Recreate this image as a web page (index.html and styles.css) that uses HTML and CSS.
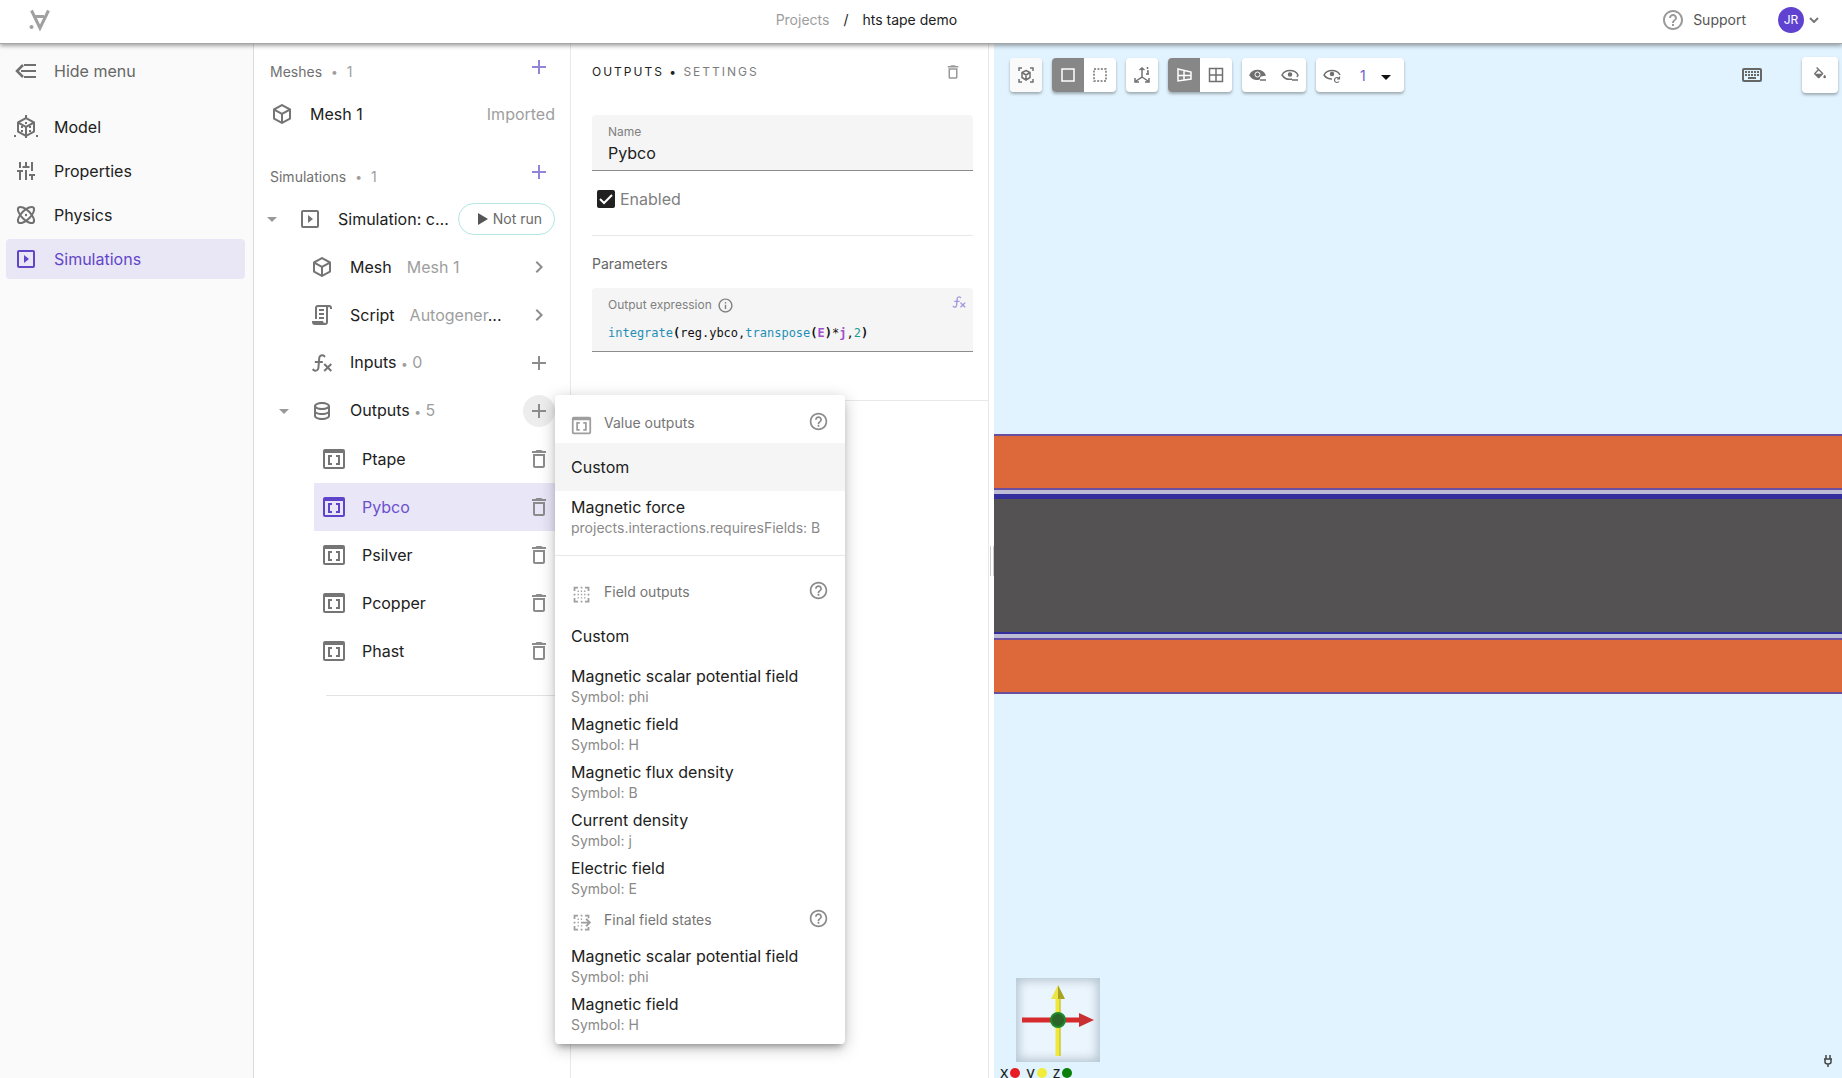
FILE: index.html
```html
<!DOCTYPE html>
<html lang="en">
<head>
<meta charset="utf-8">
<title>hts tape demo</title>
<link rel="stylesheet" href="styles.css">
</head>
<body>
<svg class="sprite" aria-hidden="true">
  <symbol id="cube" viewBox="0 0 24 24"><path d="M21,16.5C21,16.88 20.79,17.21 20.47,17.38L12.57,21.82C12.41,21.94 12.21,22 12,22C11.79,22 11.59,21.94 11.43,21.82L3.53,17.38C3.21,17.21 3,16.88 3,16.5V7.5C3,7.12 3.21,6.79 3.53,6.62L11.43,2.18C11.59,2.06 11.79,2 12,2C12.21,2 12.41,2.06 12.57,2.18L20.47,6.62C20.79,6.79 21,7.12 21,7.5V16.5M12,4.15L6.04,7.5L12,10.85L17.96,7.5L12,4.15M5,15.91L11,19.29V12.58L5,9.21V15.91M19,15.91V9.21L13,12.58V19.29L19,15.91Z"/></symbol>
  <symbol id="trash" viewBox="0 0 24 24"><path d="M6 19c0 1.1.9 2 2 2h8c1.1 0 2-.9 2-2V7H6v12zM8 9h8v10H8V9zm7.5-5-1-1h-5l-1 1H5v2h14V4z"/></symbol>
  <symbol id="help" viewBox="0 0 24 24"><path d="M11 18h2v-2h-2v2zm1-16C6.48 2 2 6.48 2 12s4.48 10 10 10 10-4.48 10-10S17.52 2 12 2zm0 18c-4.41 0-8-3.59-8-8s3.59-8 8-8 8 3.59 8 8-3.59 8-8 8zm0-14c-2.21 0-4 1.79-4 4h2c0-1.1.9-2 2-2s2 .9 2 2c0 2-3 1.75-3 5h2c0-2.25 3-2.5 3-5 0-2.21-1.79-4-4-4z"/></symbol>
  <symbol id="info" viewBox="0 0 24 24"><path d="M11 7h2v2h-2zm0 4h2v6h-2zm1-9C6.48 2 2 6.48 2 12s4.48 10 10 10 10-4.48 10-10S17.52 2 12 2zm0 18c-4.41 0-8-3.59-8-8s3.59-8 8-8 8 3.59 8 8-3.59 8-8 8z"/></symbol>
  <symbol id="database" viewBox="0 0 24 24"><path d="M12 3C7.58 3 4 4.79 4 7V17C4 19.21 7.59 21 12 21S20 19.21 20 17V7C20 4.79 16.42 3 12 3M18 17C18 17.5 15.87 19 12 19S6 17.5 6 17V14.77C7.61 15.55 9.72 16 12 16S16.39 15.55 18 14.77V17M18 12.45C16.7 13.4 14.42 14 12 14C9.58 14 7.3 13.4 6 12.45V9.64C7.47 10.47 9.61 11 12 11C14.39 11 16.53 10.47 18 9.64V12.45M12 9C8.13 9 6 7.5 6 7S8.13 5 12 5 18 6.5 18 7 15.87 9 12 9Z"/></symbol>
  <symbol id="script" viewBox="0 0 24 24"><path d="M15,20A1,1 0 0,0 16,19V4H8A1,1 0 0,0 7,5V16H5V5A3,3 0 0,1 8,2H19A3,3 0 0,1 22,5V6H20V5A1,1 0 0,0 19,4A1,1 0 0,0 18,5V9L18,19A3,3 0 0,1 15,22H5A3,3 0 0,1 2,19V18H13A2,2 0 0,0 15,20M9,6H14V8H9V6M9,10H14V12H9V10M9,14H14V16H9V14Z"/></symbol>
  <symbol id="fx" viewBox="0 0 24 24"><path d="M12.42,5.29C11.32,5.19 10.35,6 10.25,7.11L10,10H12.82V12H9.82L9.38,17.07C9.18,19.27 7.24,20.9 5.04,20.7C3.79,20.59 2.66,19.9 2,18.83L3.5,17.33C3.83,18.38 4.96,18.97 6,18.63C6.78,18.39 7.33,17.7 7.4,16.89L7.82,12H4.82V10H8L8.27,6.93C8.46,4.73 10.39,3.1 12.6,3.28C13.86,3.39 15,4.09 15.66,5.17L14.16,6.67C13.91,5.9 13.23,5.36 12.42,5.29M22,13.65L20.59,12.24L17.76,15.07L14.93,12.24L13.5,13.65L16.35,16.5L13.5,19.31L14.93,20.72L17.76,17.89L20.59,20.72L22,19.31L19.17,16.5L22,13.65Z"/></symbol>
  <symbol id="keyboard" viewBox="0 0 24 24"><path d="M4,5A2,2 0 0,0 2,7V17A2,2 0 0,0 4,19H20A2,2 0 0,0 22,17V7A2,2 0 0,0 20,5H4M4,7H20V17H4V7M5,8V10H7V8H5M8,8V10H10V8H8M11,8V10H13V8H11M14,8V10H16V8H14M17,8V10H19V8H17M5,11V13H7V11H5M8,11V13H10V11H8M11,11V13H13V11H11M14,11V13H16V11H14M17,11V13H19V11H17M8,14V16H16V14H8Z"/></symbol>
  <symbol id="fill" viewBox="0 0 24 24"><path d="M19,11.5C19,11.5 17,13.67 17,15A2,2 0 0,0 19,17A2,2 0 0,0 21,15C21,13.67 19,11.5 19,11.5M5.21,10L10,5.21L14.79,10M16.56,8.94L7.62,0L6.21,1.41L8.59,3.79L3.44,8.94C2.85,9.5 2.85,10.47 3.44,11.06L8.94,16.56C9.23,16.85 9.62,17 10,17C10.38,17 10.77,16.85 11.06,16.56L16.56,11.06C17.15,10.47 17.15,9.5 16.56,8.94Z"/></symbol>
  <symbol id="plus" viewBox="0 0 24 24"><path d="M19 13h-6v6h-2v-6H5v-2h6V5h2v6h6z"/></symbol>
  <symbol id="chevron" viewBox="0 0 24 24"><path d="M8.59 16.59 13.17 12 8.59 7.41 10 6l6 6-6 6z"/></symbol>
  <symbol id="caret" viewBox="0 0 24 24"><path d="m7 10 5 5 5-5z"/></symbol>
  <symbol id="play-box" viewBox="0 0 24 24"><path d="M5 3h14a2 2 0 0 1 2 2v14a2 2 0 0 1-2 2H5a2 2 0 0 1-2-2V5a2 2 0 0 1 2-2zm0 2v14h14V5zm5 3 5 4-5 4z"/></symbol>
  <symbol id="value" viewBox="0 0 24 24"><path fill-rule="evenodd" d="M3 2h18a2 2 0 0 1 2 2v16a2 2 0 0 1-2 2H3a2 2 0 0 1-2-2V4a2 2 0 0 1 2-2zM3 6v14h18V6zM6 8h4v2H8v6h2v2H6zM14 8h4v10h-4v-2h2v-6h-2z"/></symbol>
  <symbol id="field" viewBox="0 0 24 24"><path d="M3 3h5v2H5v3H3zM16 3h5v5h-2V5h-3zM3 16h2v3h3v2H3zM19 16h2v5h-5v-2h3zM11 3h2v2h-2zM3 11h2v2H3zM19 11h2v2h-2zM11 19h2v2h-2zM7.500 7.500h1.500v1.500H7.500zM11.250 7.500h1.500v1.500h-1.500zM15 7.500h1.500v1.500H15zM7.500 11.250h1.500v1.500H7.500zM11.250 11.250h1.500v1.500h-1.500zM15 11.250h1.500v1.500H15zM7.500 15h1.500v1.500H7.500zM11.250 15h1.500v1.500h-1.500zM15 15h1.500v1.500H15z"/></symbol>
  <symbol id="field-final" viewBox="0 0 24 24"><path d="M3 3h5v2H5v3H3zM16 3h5v4h-2V5h-3zM3 16h2v3h3v2H3zM19 17h2v4h-5v-2h3zM11 3h2v2h-2zM3 11h2v2H3zM11 19h2v2h-2zM7.500 7.500h1.500v1.500H7.500zM11.250 7.500h1.500v1.500h-1.500zM7.500 11.250h1.500v1.500H7.500zM7.500 15h1.500v1.500H7.500zM11.250 15h1.500v1.500h-1.500zM11.500 11h7.500l-2.500-2.500 1.500-1.500 5 5-5 5-1.500-1.500L19 13h-7.500z"/></symbol>
</svg>

<header class="topbar">
  <a class="logo" href="#" aria-label="Home">
    <svg width="24" height="24" viewBox="0 0 24 24"><path d="M3.500 2.500 12 20 20.500 2.500M6 8.500H16" fill="none" stroke="#a0a0a0" stroke-width="3"/><circle cx="3.500" cy="19" r="2" fill="#a0a0a0"/></svg>
  </a>
  <nav class="crumbs" aria-label="Breadcrumb"><a href="#">Projects</a><span>/</span><span>hts tape demo</span></nav>
  <div class="account">
    <a class="support" href="#"><svg class="icon"><use href="#help"/></svg>Support</a>
    <button class="user" aria-label="Account"><span class="avatar">JR</span><svg width="10" height="6" viewBox="0 0 10 6"><path d="m1 1 4 4 4-4" fill="none" stroke="#777" stroke-width="2"/></svg></button>
  </div>
</header>

<div class="workspace">
  <nav class="menu">
    <button class="hide"><svg class="icon" viewBox="0 0 24 24"><path d="M10 5h12v2H10zM7 11h15v2H7zM10 17h12v2H10z"/><path d="M9 6 3 12l6 6" fill="none" stroke="currentColor" stroke-width="2.500"/></svg>Hide menu</button>
    <a href="#"><svg class="icon" viewBox="0 0 24 24"><use href="#cube"/><path d="M11 0h2v4h-2zM0 20h2v2H0zM22 20h2v2h-2zM11 7h2v2h-2zM7 11h2v2H7zM15 11h2v2h-2zM7 15h2v2H7zM15 15h2v2h-2zM11 12h2v11h-2z"/></svg>Model</a>
    <a href="#"><svg class="icon" viewBox="0 0 24 24"><path d="M5 3h2v6H5zM11 3h2v5h-2zM17 3h2v9h-2zM3 11h6v2H7v8H5v-8H3zM8.500 7h7v2h-7zM11 11h2v10h-2zM15 15h6v2h-2v4h-2v-4h-2z"/></svg>Properties</a>
    <a href="#"><svg class="icon" viewBox="0 0 24 24"><g fill="none" stroke="currentColor" stroke-width="2"><ellipse cx="12" cy="12" rx="10.500" ry="4.500" transform="rotate(45 12 12)"/><ellipse cx="12" cy="12" rx="10.500" ry="4.500" transform="rotate(-45 12 12)"/></g><circle cx="12" cy="12" r="1.200"/></svg>Physics</a>
    <a href="#" class="active"><svg class="icon"><use href="#play-box"/></svg>Simulations</a>
  </nav>

  <section class="tree">
    <header class="group"><h2>Meshes <i>•</i> <b>1</b></h2><button class="add accent" aria-label="Add mesh"><svg class="icon"><use href="#plus"/></svg></button></header>
    <div class="row"><svg class="icon"><use href="#cube"/></svg><span class="name">Mesh 1</span><span class="hint end">Imported</span></div>

    <header class="group second"><h2>Simulations <i>•</i> <b>1</b></h2><button class="add accent" aria-label="Add simulation"><svg class="icon"><use href="#plus"/></svg></button></header>
    <div class="row sim"><svg class="icon caret"><use href="#caret"/></svg><svg class="icon"><use href="#play-box"/></svg><span class="name clip">Simulation: current</span><button class="run"><svg width="10" height="12" viewBox="0 0 10 12"><path d="M0 0v12l10-6z"/></svg>Not run</button></div>
    <div class="row child"><svg class="icon"><use href="#cube"/></svg><span class="name">Mesh</span><span class="hint gap">Mesh 1</span><button class="add end" aria-label="Open mesh"><svg class="icon"><use href="#chevron"/></svg></button></div>
    <div class="row child"><svg class="icon"><use href="#script"/></svg><span class="name">Script</span><span class="gap short"><span class="hint">Autogener</span>...</span><button class="add end" aria-label="Open script"><svg class="icon"><use href="#chevron"/></svg></button></div>
    <div class="row child"><svg class="icon"><use href="#fx"/></svg><span class="name">Inputs <i>•</i> <b>0</b></span><button class="add end" aria-label="Add input"><svg class="icon"><use href="#plus"/></svg></button></div>
    <div class="row outputs"><svg class="icon caret"><use href="#caret"/></svg><svg class="icon"><use href="#database"/></svg><span class="name">Outputs <i>•</i> <b>5</b></span><button class="add end pressed" aria-label="Add output" aria-expanded="true"><svg class="icon"><use href="#plus"/></svg></button>
      <div class="popover">
        <h3><svg class="icon"><use href="#value"/></svg>Value outputs<button aria-label="Help on value outputs"><svg class="icon"><use href="#help"/></svg></button></h3>
        <button class="option hover">Custom</button>
        <button class="option double">Magnetic force<small>projects.interactions.requiresFields: B</small></button>
        <hr>
        <h3><svg class="icon"><use href="#field"/></svg>Field outputs<button aria-label="Help on field outputs"><svg class="icon"><use href="#help"/></svg></button></h3>
        <button class="option">Custom</button>
        <button class="option double">Magnetic scalar potential field<small>Symbol: phi</small></button>
        <button class="option double">Magnetic field<small>Symbol: H</small></button>
        <button class="option double">Magnetic flux density<small>Symbol: B</small></button>
        <button class="option double">Current density<small>Symbol: j</small></button>
        <button class="option double">Electric field<small>Symbol: E</small></button>
        <h3><svg class="icon"><use href="#field-final"/></svg>Final field states<button aria-label="Help on final field states"><svg class="icon"><use href="#help"/></svg></button></h3>
        <button class="option double">Magnetic scalar potential field<small>Symbol: phi</small></button>
        <button class="option double">Magnetic field<small>Symbol: H</small></button>
      </div>
    </div>
    <div class="leaves">
      <div class="row leaf"><svg class="icon"><use href="#value"/></svg><span class="name">Ptape</span><button class="add end" aria-label="Delete Ptape"><svg class="icon"><use href="#trash"/></svg></button></div>
      <div class="row leaf selected"><svg class="icon"><use href="#value"/></svg><span class="name">Pybco</span><button class="add end" aria-label="Delete Pybco"><svg class="icon"><use href="#trash"/></svg></button></div>
      <div class="row leaf"><svg class="icon"><use href="#value"/></svg><span class="name">Psilver</span><button class="add end" aria-label="Delete Psilver"><svg class="icon"><use href="#trash"/></svg></button></div>
      <div class="row leaf"><svg class="icon"><use href="#value"/></svg><span class="name">Pcopper</span><button class="add end" aria-label="Delete Pcopper"><svg class="icon"><use href="#trash"/></svg></button></div>
      <div class="row leaf"><svg class="icon"><use href="#value"/></svg><span class="name">Phast</span><button class="add end" aria-label="Delete Phast"><svg class="icon"><use href="#trash"/></svg></button></div>
    </div>
  </section>

  <section class="settings">
    <div class="panel">
      <header><h1>OUTPUTS • <span>SETTINGS</span></h1><button class="remove" aria-label="Delete output"><svg class="icon"><use href="#trash"/></svg></button></header>
      <div class="field"><label for="name">Name</label><input id="name" type="text" value="Pybco"></div>
      <label class="check"><input type="checkbox" checked><svg viewBox="0 0 18 18" width="18" height="18"><path d="m3 9 4 4 8-8" fill="none" stroke="#fff" stroke-width="2"/></svg>Enabled</label>
      <hr>
      <h2>Parameters</h2>
      <div class="field expr"><div class="label" id="expr-label">Output expression <svg class="icon"><use href="#info"/></svg></div><button class="fx" aria-label="Insert function"><svg class="icon"><use href="#fx"/></svg></button>
        <div class="code" role="textbox" aria-labelledby="expr-label" contenteditable="true" spellcheck="false"><span class="fn">integrate</span><b>(</b>reg.ybco,<span class="fn">transpose</span><b>(</b><b class="var">E</b><b>)</b>*<b class="var">j</b>,<span class="num">2</span><b>)</b></div></div>
    </div>
  </section>

  <div class="splitter" role="separator" aria-orientation="vertical"><span></span></div>

  <main class="view">
    <div class="tape" role="img" aria-label="Cross-section of tape layers">
      <div class="copper"></div><div class="silver upper"></div><div class="core"></div><div class="silver lower"></div><div class="copper"></div>
    </div>
    <div class="tools">
      <div class="set"><button aria-label="Fit view" class="soft"><svg class="tool" viewBox="0 0 18 18"><path d="M2 5V2h3M13 2h3v3M16 13v3h-3M5 16H2v-3" /><path d="m9 4.500 4 2v5l-4 2.500-4-2.500v-5zM5 6.500l4 2.500 4-2.500M9 9v5"/></svg></button></div>
      <div class="set"><button class="on" aria-label="Solid"><svg class="tool" viewBox="0 0 18 18"><path d="M3 3h12v12H3z"/></svg></button><button aria-label="Box select"><svg class="tool" viewBox="0 0 18 18"><path d="M3 3h12v12H3z" stroke-dasharray="2 1.430"/></svg></button></div>
      <div class="set"><button aria-label="Axes"><svg class="tool" viewBox="0 0 18 18"><path d="M9 2v9l-6 4M9 11l6 4M6.500 4 9 2l2.500 2M2 12v4h4M16 12v4h-4M14.500 1v2M14 5h1v3M13 8h3"/></svg></button></div>
      <div class="set"><button class="on" aria-label="Perspective"><svg class="tool" viewBox="0 0 18 18"><path d="m3 3 13 3v7L3 15zM3 9.500h13M9 4.500v10"/></svg></button><button aria-label="Orthographic"><svg class="tool" viewBox="0 0 18 18"><path d="M2.500 2.500h13v13h-13zM9 2v14M2 9h14"/></svg></button></div>
      <div class="set"><button aria-label="Hide selected"><svg class="tool" viewBox="0 0 18 18"><path d="M1 9c3-6 12-6 15 0l-5 1-1 3C6 14 3 12 1 9zM11 14h6" fill="currentColor"/><circle cx="8.500" cy="8.500" r="2.500" fill="#707070" stroke="#fff" stroke-width="1"/></svg></button><button aria-label="Hide others"><svg class="tool" viewBox="0 0 18 18"><path d="M11 13C7 14 3 12 1 9c3-6 13-6 16 0l-1 2M11 14h6"/><circle cx="9" cy="8.500" r="1.500" fill="currentColor"/></svg></button></div>
      <div class="set"><button aria-label="Reset visibility"><svg class="tool" viewBox="0 0 18 18"><path d="M9 13C6 13 3 12 1 9c3-6 13-6 16 0"/><circle cx="9" cy="8" r="1.500" fill="currentColor"/><path d="M16 12.500a2.500 2.500 0 1 0 0 3M16.500 10.500v2.500H14" stroke-width="1.200"/></svg></button><div class="pick"><select aria-label="Opacity level"><option>1</option></select><svg class="icon"><use href="#caret"/></svg></div></div>
      <button class="keys" aria-label="Keyboard shortcuts"><svg class="icon"><use href="#keyboard"/></svg></button>
      <button class="paint" aria-label="Fill colour"><svg class="icon"><use href="#fill"/></svg></button>
    </div>
    <div class="gizmo">
      <svg width="84" height="84" viewBox="0 0 84 84" aria-label="Axis orientation" role="img">
        <path d="M6 39.500h58v5H6z" fill="#d62a2c"/><path d="M63 35v14l15-7z" fill="#c93034"/>
        <path d="M39.500 18h5v60h-5z" fill="#eee93c"/><path d="M42 7v14h-7z" fill="#e9e54a"/><path d="M42 7v14h7z" fill="#a8a21f"/><path d="M44 20v58" stroke="#bdb82f"/>
        <circle cx="42" cy="42" r="7" fill="#2a6428" stroke="#1e8a2c" stroke-width="2"/>
      </svg>
    </div>
    <div class="legend"><span>x</span><i class="x"></i><span>y</span><i class="y"></i><span>z</span><i class="z"></i></div>
    <svg class="plug" width="10" height="14" viewBox="0 0 10 14"><path d="M3 1v4M7 1v4M1 5h8M2 5v3q0 2 3 2t3-2V5M5 10v3" fill="none" stroke="#444" stroke-width="1.500"/></svg>
  </main>
</div>
</body>
</html>
```
FILE: styles.css
```css
* { box-sizing: border-box; }
body {
  margin: 0;
  height: 100vh;
  display: flex;
  flex-direction: column;
  overflow: hidden;
  font: 16px/24px Inter, "Liberation Sans", sans-serif;
  color: #212121;
  background: #fff;
}
h1, h2, h3 { margin: 0; font-weight: 400; }
a { color: inherit; text-decoration: none; }
button {
  font: inherit;
  color: inherit;
  background: none;
  border: 0;
  padding: 0;
  text-align: left;
}
hr { border: 0; border-top: 1px solid #e8e8e8; margin: 0; }
.sprite { position: absolute; width: 0; height: 0; }
.icon { width: 24px; height: 24px; fill: currentColor; flex: none; }

/* top bar */
.topbar {
  height: 44px;
  flex: none;
  display: grid;
  grid-template-columns: 42% 1fr auto;
  align-items: center;
  padding-bottom: 4px;
  font-size: 14px;
  position: relative;
  z-index: 5;
  background: #fff;
  border-bottom: 1px solid #a3a8a6;
  box-shadow: 0 2px 4px rgba(0, 0, 0, .35);
}
.logo { margin-left: 28px; display: flex; }
.crumbs { display: flex; gap: 14px; padding-left: 2px; }
.crumbs a { color: #9e9e9e; }
.account { display: flex; gap: 32px; padding-right: 23px; }
.support { display: flex; align-items: center; gap: 8px; color: #555; }
.support .icon { color: #9a9a9a; }
.user { display: flex; align-items: center; gap: 5px; }
.avatar {
  width: 26px;
  height: 26px;
  border-radius: 50%;
  background: #5f43d0;
  color: #fff;
  font-size: 12px;
  line-height: 26px;
  text-align: center;
}

.workspace { flex: 1; min-height: 0; display: flex; }

/* left menu */
.menu {
  width: 254px;
  flex: none;
  display: flex;
  flex-direction: column;
  gap: 4px;
  padding: 7px 8px 0 6px;
  background: #fafafa;
  border-right: 1px solid #dcdcdc;
}
.menu a, .menu button {
  display: flex;
  align-items: center;
  gap: 16px;
  height: 40px;
  padding-left: 8px;
  border-radius: 4px;
}
.menu .icon { color: #707070; }
.menu .hide { color: #666; margin-bottom: 12px; }
.menu .active, .menu .active .icon { color: #6246c8; }
.menu .active { background: #e9e7f6; }

/* model tree */
.tree { width: 317px; flex: none; padding: 0 15px 0 16px; border-right: 1px solid #e8e8e8; }
.tree i { font-style: normal; font-size: 12px; color: #9e9e9e; }
.tree b { font-weight: 400; color: #9e9e9e; }
.group { display: flex; align-items: center; justify-content: space-between; height: 46px; }
.group h2 { display: flex; gap: 9px; font-size: 14px; color: #707070; padding-top: 10px; }
.second { margin-top: 11px; }
.row { display: flex; align-items: center; height: 48px; gap: 16px; position: relative; }
.row .icon { color: #757575; }
.name { white-space: nowrap; }
.hint { color: #9e9e9e; }
.end { margin-left: auto; }
.add { width: 32px; height: 32px; display: flex; align-items: center; justify-content: center; border-radius: 50%; }
.row .add .icon { color: #8c8c8c; }
.accent { color: #9284d8; }
.pressed { background: #ededed; }
.row .caret { color: #999; margin-left: -10px; }
.sim .caret { margin-right: -2px; }
.clip { flex: 1; min-width: 0; overflow: hidden; text-overflow: ellipsis; }
.run {
  display: flex;
  align-items: center;
  gap: 5px;
  height: 32px;
  margin-left: -8px;
  padding: 0 12px 0 19px;
  border: 1px solid #b4e6e2;
  border-radius: 16px;
  font-size: 14px;
  color: #6a6a6a;
}
.run svg { fill: #555; }
.child { padding-left: 40px; }
.child .gap { margin-left: -1px; }
.short { white-space: nowrap; }
.outputs { padding-left: 12px; }
.outputs .caret { margin-right: -2px; }
.leaves { margin-left: 44px; }
.leaves::after { content: ""; display: block; margin: 20px 0 0 12px; border-top: 1px solid #e3e3e3; }
.leaf { padding-left: 8px; }
.leaf.selected { background: #e9e6f8; color: #6c50cc; }
.leaf.selected > .icon { color: #5f43c8; }

/* add-output popover */
.popover {
  position: absolute;
  z-index: 10;
  left: 100%;
  top: 8px;
  width: 290px;
  padding: 8px 0;
  background: #fff;
  border-radius: 4px;
  box-shadow: 0 5px 6px -3px rgba(0, 0, 0, .3), 0 4px 16px rgba(0, 0, 0, .25);
}
.popover h3 { display: flex; align-items: center; gap: 12px; height: 40px; padding: 0 16px; font-size: 14px; color: #757575; }
.popover h3 > .icon { width: 21px; height: 21px; margin-top: 4px; color: #9e9e9e; }
.popover h3 button { margin: 0 0 3px auto; display: flex; }
.popover h3 button .icon { width: 21px; height: 21px; color: #8c8c8c; }
.popover hr { margin: 16px 0; }
.option { display: flex; flex-direction: column; justify-content: center; width: 100%; height: 48px; padding: 0 16px; line-height: 22px; }
.double { padding-top: 4px; }
.option small { font-size: 14px; line-height: 20px; color: #8a8a8a; white-space: nowrap; }
.hover { background: #f5f5f5; }

/* settings */
.settings { width: 418px; flex: none; border-right: 1px solid #e8e8e8; }
.panel { height: 357px; padding: 13px 15px 0 21px; border-bottom: 1px solid #e8e8e8; }
.panel header { display: flex; align-items: center; justify-content: space-between; height: 30px; padding-right: 11px; }
h1 { font-size: 12px; letter-spacing: 2px; }
h1 span { color: #7d7d7d; }
.remove { display: flex; color: #999; }
.remove .icon { width: 18px; height: 18px; }
.field { position: relative; background: #f5f5f5; border-bottom: 1px solid #8c8c8c; border-radius: 4px 4px 0 0; padding: 0 16px; }
.panel header + .field { margin-top: 28px; height: 56px; padding-top: 7px; }
.field label, .label { display: flex; align-items: center; gap: 5px; font-size: 12px; line-height: 20px; color: #808080; }
.field input { display: block; width: 100%; border: 0; padding: 0; background: none; font: inherit; line-height: 22px; color: inherit; outline: 0; }
.check { display: flex; align-items: center; gap: 5px; width: max-content; margin: 16px 0 24px 5px; color: #808080; }
.check input { appearance: none; width: 18px; height: 18px; margin: 0; border-radius: 2px; background: #212121; }
.check svg { margin-left: -23px; pointer-events: none; }
.panel h2 { font-size: 14px; color: #666; margin: 16px 0 12px; }
.expr { height: 64px; padding-top: 7px; }
.label .icon { width: 17px; height: 17px; }
.fx { position: absolute; top: 6px; right: 6px; display: flex; color: #a496de; }
.fx .icon { width: 16px; height: 16px; }
.code { margin-top: 8px; font: 12px/20px "DejaVu Sans Mono", monospace; color: #111; white-space: nowrap; }
.fn { color: #1f8fb8; }
.var { color: #a24fd0; }
.num { color: #1c9a94; }

.splitter { width: 5px; flex: none; display: flex; align-items: center; }
.splitter span { width: 5px; height: 30px; margin-left: 1px; border: solid #ccc; border-width: 0 1px; }

/* 3D view */
.view { flex: 1; min-width: 0; position: relative; display: flex; align-items: center; background: #e1f3fe; }
.tape { flex: 1; padding-top: 5px; }
.copper { height: 56px; background: #dd693a; border: solid #6a4fa0; border-width: 2px 0; }
.silver { height: 4px; background: #bcbcd4; }
.core { height: 140px; background: #545252; border: solid #322f9c; border-width: 5px 0 2px; }
.tools { position: absolute; top: 13px; left: 16px; right: 4px; display: flex; align-items: center; gap: 10px; }
.set, .paint { background: #fff; border-radius: 4px; box-shadow: 0 2px 3px rgba(0, 0, 0, .3); }
.set { display: flex; height: 34px; overflow: hidden; }
.set button { width: 32px; display: flex; align-items: center; justify-content: center; color: #707070; }
.set .soft { background: #fafafa; }
.set .on { background: #878787; color: #fff; }
.tool { width: 18px; height: 18px; fill: none; stroke: currentColor; stroke-width: 1.5; }
.pick { position: relative; display: flex; }
.pick select { appearance: none; width: 56px; border: 0; padding: 0 0 0 12px; background: none; font: 14px Inter, sans-serif; color: #6c5fd0; }
.pick .icon { position: absolute; right: 6px; top: 7px; color: #111; pointer-events: none; }
.keys { display: flex; margin-left: auto; margin-right: 28px; color: #666; }
.paint { width: 36px; height: 36px; display: flex; align-items: center; justify-content: center; color: #707070; }
.paint .icon { width: 16px; height: 16px; }
.gizmo { position: absolute; left: 22px; bottom: 16px; width: 84px; height: 84px; background: #ebf5fd; box-shadow: inset 0 0 10px 3px #b7c6d2; }
.legend { position: absolute; left: 6px; bottom: -4px; display: flex; align-items: center; line-height: 20px; font-family: "Noto Sans", sans-serif; }
.legend i { width: 10px; height: 10px; border-radius: 50%; margin: 2px 6px 0 2px; }
.x { background: #e81c24; }
.y { background: #f0ee3a; }
.z { background: #0a800a; }
.plug { position: absolute; right: 9px; bottom: 10px; }
```
